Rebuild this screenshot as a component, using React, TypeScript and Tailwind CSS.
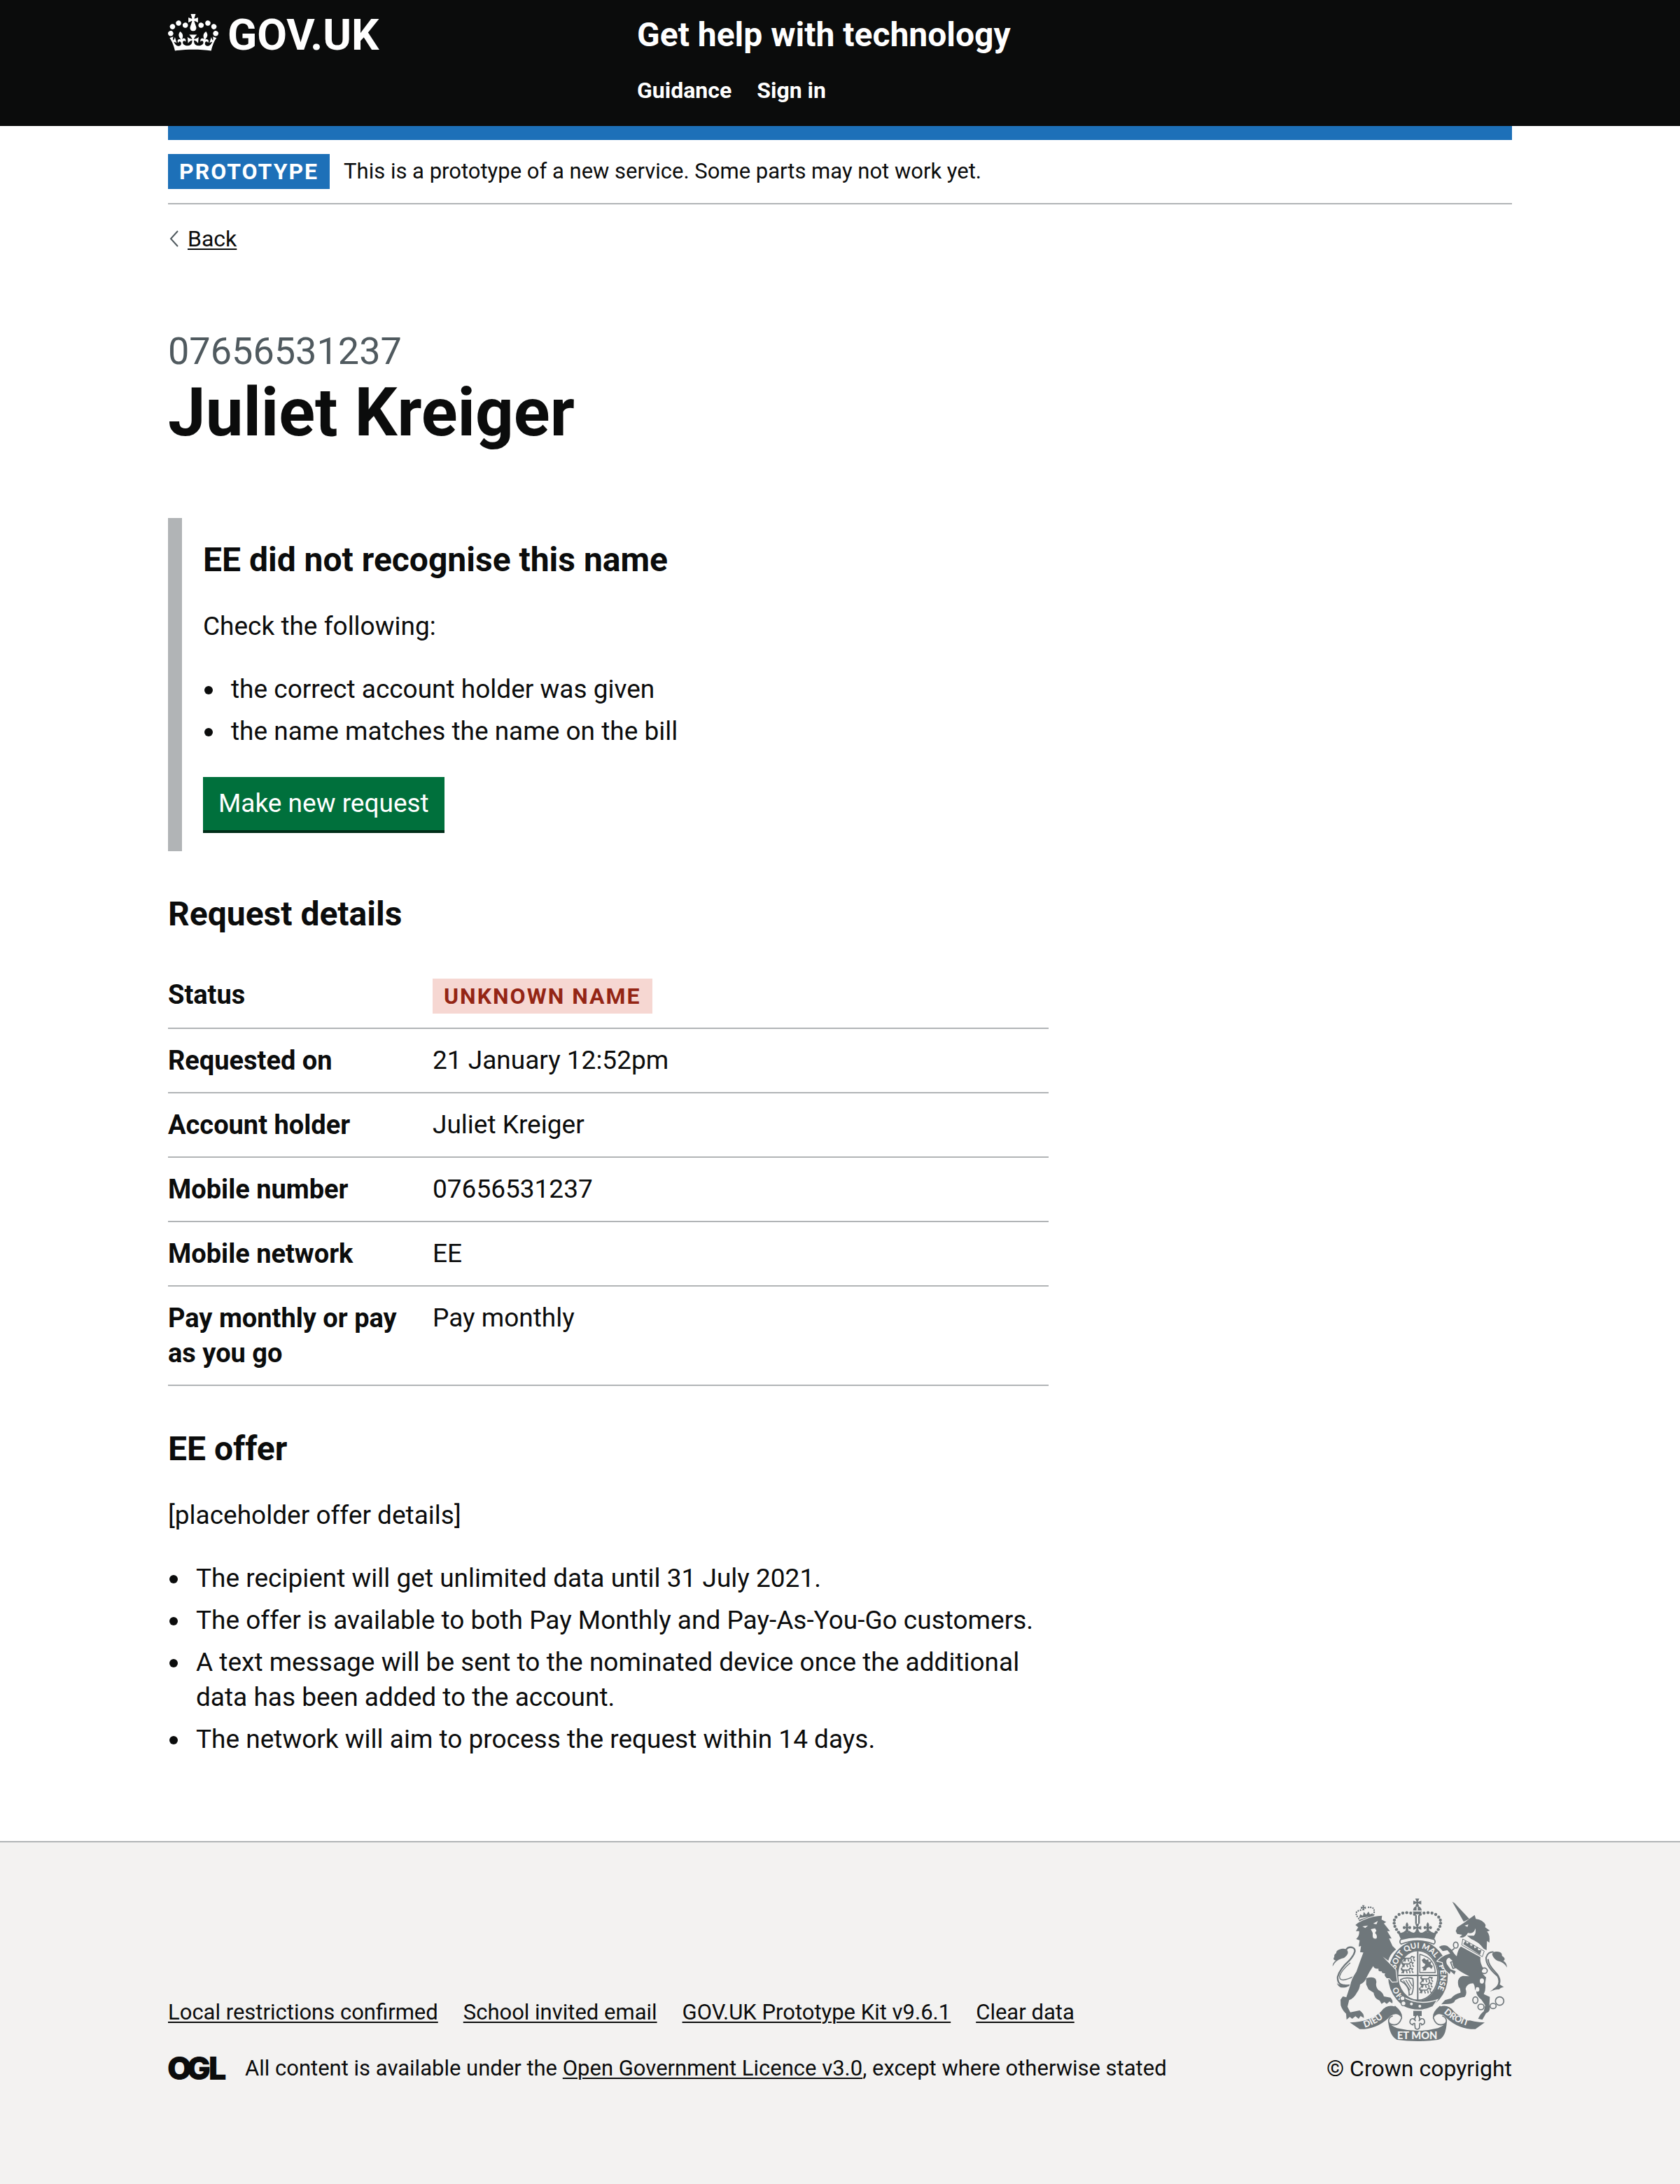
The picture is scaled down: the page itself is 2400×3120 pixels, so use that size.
import React from "react";

const link = "underline decoration-2 underline-offset-[3px]";
const h2 = "text-[48px] leading-[60px] font-bold";

const rows: [string, React.ReactNode][] = [
  [
    "Status",
    <strong className="mt-[2px] block w-fit bg-[#f6d7d2] px-4 text-[32px] leading-[50px] font-bold tracking-[2px] text-[#942514] uppercase">
      Unknown name
    </strong>,
  ],
  ["Requested on", "21 January 12:52pm"],
  ["Account holder", "Juliet Kreiger"],
  ["Mobile number", "07656531237"],
  ["Mobile network", "EE"],
  ["Pay monthly or pay as you go", "Pay monthly"],
];

const checks = ["the correct account holder was given", "the name matches the name on the bill"];

const offers = [
  "The recipient will get unlimited data until 31 July 2021.",
  "The offer is available to both Pay Monthly and Pay-As-You-Go customers.",
  "A text message will be sent to the nominated device once the additional data has been added to the account.",
  "The network will aim to process the request within 14 days.",
];

const footerLinks = [
  "Local restrictions confirmed",
  "School invited email",
  "GOV.UK Prototype Kit v9.6.1",
  "Clear data",
];

function BulletList({ items }: { items: string[] }) {
  return (
    <ul className="mt-10 flex flex-col gap-[10px]">
      {items.map((item) => (
        <li key={item} className="flex gap-[26px] pl-[2px]">
          <span className="mt-5 size-3 shrink-0 rounded-full bg-current" />
          <span>{item}</span>
        </li>
      ))}
    </ul>
  );
}

function Crown() {
  return (
    <svg className="h-[53px] w-[72px] shrink-0" viewBox="0 0 132 97" fill="currentColor" aria-hidden="true">
      <path
        fillRule="evenodd"
        d="M25 30.2c3.5 1.5 7.7-.2 9.1-3.7 1.5-3.6-.2-7.8-3.9-9.2-3.6-1.4-7.6.3-9.1 3.9-1.4 3.5.3 7.5 3.9 9zM9 39.5c3.6 1.5 7.8-.2 9.2-3.7 1.5-3.6-.2-7.8-3.9-9.1-3.6-1.5-7.6.2-9.1 3.8-1.4 3.5.3 7.5 3.8 9zM4.4 57.2c3.5 1.5 7.7-.2 9.1-3.8 1.5-3.6-.2-7.7-3.9-9.1-3.5-1.5-7.6.3-9.1 3.8-1.4 3.5.3 7.6 3.9 9.1zm38.3-21.4c3.5 1.5 7.7-.2 9.1-3.8 1.5-3.6-.2-7.7-3.9-9.1-3.6-1.5-7.6.3-9.1 3.8-1.3 3.6.4 7.7 3.9 9.1zm64.4-5.6c-3.6 1.5-7.8-.2-9.1-3.7-1.5-3.6.2-7.8 3.8-9.2 3.6-1.4 7.7.3 9.2 3.9 1.3 3.5-.4 7.5-3.9 9zm15.9 9.3c-3.6 1.5-7.7-.2-9.1-3.7-1.5-3.6.2-7.8 3.7-9.1 3.6-1.5 7.7.2 9.2 3.8 1.5 3.5-.3 7.5-3.8 9zm4.7 17.7c-3.6 1.5-7.8-.2-9.2-3.8-1.5-3.6.2-7.7 3.9-9.1 3.6-1.5 7.7.3 9.2 3.8 1.3 3.5-.4 7.6-3.9 9.1zM89.3 35.8c-3.6 1.5-7.8-.2-9.2-3.8-1.4-3.6.2-7.7 3.9-9.1 3.6-1.5 7.7.3 9.2 3.8 1.4 3.6-.3 7.7-3.9 9.1zM69.7 17.7l8.9 4.7V9.3l-8.9 2.8c-.2-.3-.5-.6-.9-.9L72.4 0H59.6l3.5 11.2c-.3.3-.6.5-.9.9l-8.8-2.8v13.1l8.8-4.7c.3.3.6.7.9.9l-5 15.4v.1c-.2.8-.4 1.6-.4 2.4 0 4.1 3.1 7.5 7 8.1h.2c.3 0 .7.1 1 .1.4 0 .7 0 1-.1h.2c4-.6 7.1-4.1 7.1-8.1 0-.8-.1-1.7-.4-2.4V34l-5.1-15.4c.4-.2.7-.6 1-.9zM66 92.8c16.9 0 32.8 1.1 47.1 3.2 4-16.9 8.9-26.7 14-33.5l-9.6-3.4c1 4.9 1.1 7.2 0 10.2-1.5-1.4-3-4.3-4.2-8.7L108.6 76c2.8-2 5-3.2 7.5-3.3-4.4 9.4-10 11.9-13.6 11.2-4.3-.8-6.3-4.6-5.6-7.9 1-4.7 5.7-5.9 8-.5 4.3-8.7-3-11.4-7.6-8.8 7.1-7.2 7.9-13.5 2.1-21.1-8 6.1-8.1 12.3-4.5 20.8-4.7-5.4-12.1-2.5-9.5 6.2 3.4-5.2 7.9-2 7.2 3.1-.6 4.3-6.4 7.8-13.5 7.2-10.3-.9-10.9-8-11.2-13.8 2.5-.5 7.1 1.8 11 7.3L80.2 60c-4.1 4.4-8 5.3-12.3 5.4 1.4-4.4 8-11.6 8-11.6H55.5s6.4 7.2 7.9 11.6c-4.2-.1-8-1-12.3-5.4l1.4 16.4c3.9-5.5 8.5-7.7 10.9-7.3-.3 5.8-.9 12.8-11.1 13.8-7.2.6-12.9-2.9-13.5-7.2-.7-5 3.8-8.3 7.1-3.1 2.7-8.7-4.6-11.6-9.4-6.2 3.7-8.5 3.6-14.7-4.6-20.8-5.8 7.6-5 13.9 2.2 21.1-4.7-2.6-11.9.1-7.7 8.8 2.3-5.5 7.1-4.2 8.1.5.7 3.3-1.3 7.1-5.7 7.9-3.5.7-9-1.8-13.5-11.2 2.5.1 4.7 1.3 7.5 3.3l-4.7-15.4c-1.2 4.4-2.7 7.2-4.3 8.7-1.1-3-.9-5.3 0-10.2l-9.5 3.4c5 6.9 9.9 16.7 14 33.5 14.8-2.1 30.8-3.2 47.7-3.2z"
      />
    </svg>
  );
}

function OglLogo() {
  return (
    <svg className="h-[60px] w-[92px] shrink-0 font-['Inter',sans-serif] font-black" viewBox="1 0 92 60" fill="currentColor" fontSize="45" role="img" aria-label="OGL">
      <text x="0" y="46">O</text>
      <text x="28" y="46">G</text>
      <text x="59" y="46">L</text>
    </svg>
  );
}

const archDots = [
  [425, 104], [409, 99], [392, 97], [375, 99], [359, 105], [346, 116],
  [339, 129], [338, 142], [341, 156], [348, 169], [357, 181],
];

function Lis({ x, y }: { x: number; y: number }) {
  return (
    <path
      transform={`translate(${x} ${y})`}
      d="M0-20q9 10 4 22q8-10 14-1q1 9-8 9q-1-5-5-3q0 8 4 17h-18q4-9 4-17q-4-2-5 3q-9 0-8-9q6-9 14 1q-5-12 4-22z"
    />
  );
}

function Pattee({ x, y, s }: { x: number; y: number; s: number }) {
  return (
    <path
      transform={`translate(${x} ${y}) scale(${s})`}
      d="M-9-18h18l-6 15l15-6v18l-15-6l6 15h-18l6-15l-15 6v-18l15 6z"
    />
  );
}

function Passant({ x, y }: { x: number; y: number }) {
  return (
    <path
      transform={`translate(${x} ${y})`}
      fill="none"
      strokeWidth="5"
      d="M-26 8l6-8l-8-8l10 3h22l6-8l11 3l-4 7M-16-3l-3 12M-6-2l4 11M8-3l2 12M18 0l6 7M-26-8q-4-6 4-6"
    />
  );
}

function RoyalArms() {
  return (
    <svg className="h-[204px] w-[250px]" viewBox="72 36 750 612" fill="#6f777b" stroke="none" role="img" aria-label="Royal coat of arms">
      <defs>
        <path id="garter" d="M345 340A97 117 0 1 1 496 462" />
        <path id="garter-start" d="M380 458A97 117 0 0 1 343 366" />
        <path id="dieu" d="M212 590Q270 572 316 527" />
        <path id="droit" d="M550 526Q600 572 676 588" />
      </defs>

      {/* Central crown */}
      <g>
        <Pattee x={437} y={54} s={0.95} />
        <path d="M419 88Q420 70 437 70Q454 70 456 88Z" />
        <path d="M434 72h5v16h-5z" fill="#f3f2f1" />
        <path d="M417 92h40l-8 12h-24zM428 108h7v36h-7zM441 108h7v36h-7z" />
        {archDots.map(([x, y]) => (
          <React.Fragment key={`${x}-${y}`}>
            <circle cx={x} cy={y} r="6.5" />
            <circle cx={875 - x} cy={y} r="6.5" />
          </React.Fragment>
        ))}
        <Lis x={393} y={158} />
        <Lis x={482} y={158} />
        <Pattee x={437} y={162} s={0.95} />
        <path d="M352 176Q368 192 386 174L394 184L402 174Q416 186 424 182L437 172L450 182Q460 186 473 174L482 184L490 174Q508 192 523 176L510 210Q438 194 366 210Z" />
      </g>

      {/* Garter and shield */}
      <g>
        <ellipse cx="440" cy="366" rx="108" ry="128" fill="none" stroke="#6f777b" strokeWidth="40" />
        <ellipse cx="439" cy="366" rx="86" ry="106" fill="#f3f2f1" stroke="#6f777b" strokeWidth="5" />
        <g className="font-['Lato',sans-serif] font-black" fill="#f3f2f1" aria-hidden="true">
          <text fontSize="34">
            <textPath href="#garter">SOIT QUI MAL Y PENSE</textPath>
          </text>
          <text fontSize="34">
            <textPath href="#garter-start">HO</textPath>
          </text>
        </g>
        <path d="M354 366h170M439 262v210" fill="none" stroke="#6f777b" strokeWidth="6" />
        <g stroke="#6f777b">
          <Passant x={403} y={298} />
          <Passant x={398} y={322} />
          <Passant x={396} y={348} />
          <Passant x={480} y={386} />
          <Passant x={478} y={410} />
          <Passant x={474} y={434} />
        </g>
        <path d="M448 276Q512 290 514 354H448Z" fill="none" stroke="#6f777b" strokeWidth="4" />
        <path d="M456 300l10-8l10 8l8-4l2 12l12-2l-4 12l10 8l-6 12l-10-8l-10 4l-4 10l-14 2l4-8l-8-6l12-6l4-8l-10-6z" />
        <path d="M366 384Q384 372 418 380Q424 420 414 446L402 450Q404 410 366 390Z" fill="none" stroke="#6f777b" strokeWidth="5" />
        <path d="M378 388L406 430M388 386L411 424M400 384L416 412" fill="none" stroke="#6f777b" strokeWidth="4" />
        <path d="M366 452Q440 500 524 470L504 500Q440 530 376 498Z" stroke="#f3f2f1" strokeWidth="4" />
        <circle cx="374" cy="464" r="10" fill="#f3f2f1" stroke="#6f777b" strokeWidth="4" />
        <circle cx="378" cy="486" r="10" fill="#f3f2f1" stroke="#6f777b" strokeWidth="4" />
        <g fill="#f3f2f1">
          <circle cx="412" cy="488" r="6" />
          <circle cx="448" cy="498" r="6" />
        </g>
        <path d="M366 212Q438 192 510 212Q518 224 508 232Q438 204 368 232Q358 224 366 212Z" fill="#f3f2f1" stroke="#6f777b" strokeWidth="5" />
      </g>

      {/* Lion */}
      <g>
        <path d="M186 128L250 108L254 119L190 138Z" />
        <Pattee x={206} y={76} s={0.6} />
        <g fill="none" stroke="#6f777b" strokeWidth="7" strokeLinecap="round" strokeDasharray="0 10">
          <path d="M186 122Q160 92 196 86" />
          <path d="M250 106Q262 66 218 76" />
        </g>
        <path d="M188 120L192 104L204 110L208 94L218 106L228 92L234 104L246 100L248 112Z" />
        <path d="M158 406Q92 420 96 372Q104 340 146 302Q186 256 158 246Q140 242 132 256" fill="none" stroke="#6f777b" strokeWidth="7" />
        <path d="M170 368Q102 402 104 370Q110 346 150 312" fill="none" stroke="#6f777b" strokeWidth="4" />
        <path d="M74 328Q74 312 88 302Q72 300 82 286Q78 278 90 270Q88 258 112 252Q140 248 140 270Q134 290 112 294Q86 302 74 328Z" />
        <path d="M90 392Q94 410 124 404L146 410Q130 420 118 418Q98 420 90 392Z" />
        <path
          fillRule="evenodd"
          stroke="#f3f2f1"
          strokeWidth="7"
          paintOrder="stroke"
          d="M172 150L184 140Q230 116 268 112L286 110L284 127L304 137L294 143L320 176L308 176L327 208L316 208L331 240L346 255Q320 274 313 303L289 286L344 342L350 392L330 393L318 378L306 378Q292 365 300 358Q284 358 284 348Q268 352 271 337Q255 340 248 326Q230 352 219 376Q214 395 192 405Q190 425 178 440Q166 464 145 472L138 500L150 524L190 516Q210 530 208 548L194 540L186 552L172 541L158 552L148 544L134 556L132 530Q116 516 109 494L108 470L118 456L133 460L150 408Q154 382 176 350L194 300L206 268L192 266L196 240L186 242L190 216L175 210Q190 196 188 176L174 176L184 160ZM202 156L226 152L214 163ZM248 144L268 133L262 147ZM238 168L256 164L262 174L256 184Q268 196 262 208Q246 212 246 196L246 184Z"
        />
        <path d="M218 378Q262 366 262 394Q256 414 270 428Q290 438 294 456L322 461Q334 472 330 486L318 478L306 488L296 480L284 488L276 474Q252 464 250 440L228 426L218 404Z" />
      </g>

      {/* Unicorn */}
      <g>
        <path d="M587 50L597 56L660 124L636 136Z" />
        <path
          fillRule="evenodd"
          d="M602 176L608 160L638 140L662 122L683 107L688 124Q718 128 730 150L728 160L748 174L736 178Q750 192 746 226L736 218L734 258L722 252Q700 222 668 210L650 196L680 196Q690 184 686 164Q680 190 654 184Q640 210 618 202L630 192L608 188ZM640 152L656 148L652 158Z"
        />
        <path d="M632 210L724 262L716 286L628 236Z" fill="none" stroke="#6f777b" strokeWidth="3" />
        <path d="M634 232L644 216L650 230L662 224L666 240L680 234L682 250L696 244L698 258L712 258L706 278Z" />
        <path d="M762 428Q800 406 782 370Q730 326 732 290Q740 264 764 266M786 408Q800 380 770 350Q742 322 740 296" fill="none" stroke="#6f777b" strokeWidth="6" />
        <path d="M822 332Q820 312 806 304Q820 296 800 282Q802 266 780 264Q760 262 758 276Q764 296 782 304Q808 310 822 332Z" />
        <path d="M748 436Q770 420 790 404L808 416Q792 418 788 426Q770 424 748 436Z" />
        <path
          stroke="#f3f2f1"
          strokeWidth="7"
          paintOrder="stroke"
          d="M624 242L708 288Q704 310 720 336L712 350Q724 368 732 374L728 400Q732 430 722 446L748 458L746 494Q754 520 732 528L716 556L698 552Q708 530 722 520L728 494L712 470Q688 452 690 432L684 426Q684 408 676 400Q650 400 644 424Q652 446 640 458Q612 462 600 472Q594 488 572 488L540 490L556 472L582 464Q596 446 622 440Q624 424 614 414Q604 376 632 368L660 370Q620 350 604 336Q586 330 588 304L574 290Q556 296 564 318L580 340L602 348L596 362L580 348L576 360L560 346Q548 330 546 310L524 304Q546 280 578 272L566 258L546 262L530 244Q548 232 566 240L584 256L596 274L606 284Q612 252 624 242Z"
        />
        <g fill="#f3f2f1">
          <ellipse cx="714" cy="390" rx="9" ry="11" />
          <ellipse cx="695" cy="426" rx="8" ry="10" />
        </g>
        <g fill="none" stroke="#6f777b" strokeWidth="5">
          <ellipse cx="602" cy="236" rx="10" ry="13" />
          <path d="M596 250L582 262M580 310L596 304Q612 314 604 332L590 336Z" />
          <ellipse cx="724" cy="346" rx="13" ry="12" />
          <ellipse cx="686" cy="472" rx="11" ry="14" />
          <ellipse cx="710" cy="501" rx="13" ry="12" />
          <ellipse cx="762" cy="497" rx="13" ry="11" />
          <circle cx="790" cy="476" r="18" />
        </g>
      </g>

      {/* Motto scroll */}
      <g>
        <path d="M420 518h36v22h-36z" />
        <g fill="#f3f2f1" stroke="#6f777b" strokeWidth="5">
          <path d="M437 532q16 16 7 30q10-18 22-6q8 18-10 22q0-8-8-6l-2 20q-10 10-18 0l-2-20q-8-2-8 6q-18-4-10-22q12-12 22 6q-9-14 7-30z" />
          <path d="M340 498Q372 524 370 548Q360 578 338 578Q314 576 314 560Q316 544 332 540" />
          <path d="M536 498Q504 524 506 548Q516 578 538 578Q562 576 562 560Q560 544 544 540" />
        </g>
        <path d="M148 568Q246 562 284 518Q308 488 342 500Q368 518 370 548Q350 520 322 540Q276 590 210 596L190 596Z" />
        <path d="M726 568Q630 562 592 518Q568 488 534 500Q508 518 506 548Q526 520 554 540Q600 590 666 596L686 596Z" />
        <path d="M312 562Q320 580 350 592Q438 614 526 592Q556 580 564 562Q560 636 526 642Q438 654 350 642Q318 626 312 562Z" />
        <g className="font-['Lato',sans-serif] font-black" fill="#f3f2f1" aria-hidden="true">
          <text fontSize="38">
            <textPath href="#dieu">DIEU</textPath>
          </text>
          <text fontSize="38">
            <textPath href="#droit">DROIT</textPath>
          </text>
          <text x="437" y="638" fontSize="44" textAnchor="middle">
            ET MON
          </text>
        </g>
      </g>
    </svg>
  );
}

export default function App() {
  return (
    <div className="min-h-screen bg-white font-['Roboto',sans-serif] text-[37px] leading-[50px] text-[#0b0c0c]">
      <header className="bg-[#0b0c0c] px-[60px] text-white">
        <div className="mx-auto flex max-w-[1920px] pt-5 pb-[31px]">
          <a href="#" className="flex w-[670px] items-start gap-[13px] text-[62px] leading-[60px] font-bold">
            <Crown />
            GOV.UK
          </a>
          <div>
            <a href="#" className={`block ${h2}`}>
              Get help with technology
            </a>
            <nav className="mt-[29px] flex gap-9 text-[32px] leading-[40px] font-bold">
              <a href="#">Guidance</a>
              <a href="#">Sign in</a>
            </nav>
          </div>
        </div>
      </header>

      <div className="px-[60px]">
        <div className="mx-auto max-w-[1920px]">
          <div className="flex gap-5 border-t-20 border-b-2 border-t-[#1d70b8] border-b-[#b1b4b6] py-5 text-[31px]">
            <strong className="bg-[#1d70b8] px-4 text-[32px] font-bold tracking-[2px] text-white uppercase">Prototype</strong>
            <span>This is a prototype of a new service. Some parts may not work yet.</span>
          </div>

          <a href="#" className="mt-[29px] flex w-fit items-center gap-3 text-[32px] leading-[40px]">
            <svg className="h-6 w-4" viewBox="0 0 16 24" fill="none" stroke="#505a5f" strokeWidth="2" aria-hidden="true">
              <path d="M14 1L4 12L14 23" />
            </svg>
            <span className={link}>Back</span>
          </a>

          <main className="max-w-[1258px]">
            <span className="mt-[107px] block text-[54px] leading-[68px] text-[#505a5f]">07656531237</span>
            <h1 className="mt-[3px] text-[96px] leading-[100px] font-bold">Juliet Kreiger</h1>

            <section className="mt-[101px] border-l-20 border-[#b1b4b6] pt-[30px] pb-[26px] pl-[30px]">
              <h2 className={h2}>EE did not recognise this name</h2>
              <p className="mt-10">Check the following:</p>
              <BulletList items={checks} />
              <button type="button" className="mt-10 block h-20 border-b-4 border-[#002d18] bg-[#00703c] px-[22px] text-white">
                Make new request
              </button>
            </section>

            <h2 className={`mt-[60px] ${h2}`}>Request details</h2>
            <table className="mt-10 w-full border-separate border-spacing-0 text-left">
              <tbody>
                {rows.map(([key, value]) => (
                  <tr key={key}>
                    <th scope="row" className="w-[378px] border-b-2 border-[#b1b4b6] py-5 pr-10 align-top text-[38px] font-bold">
                      {key}
                    </th>
                    <td className="border-b-2 border-[#b1b4b6] py-5 align-top">{value}</td>
                  </tr>
                ))}
              </tbody>
            </table>

            <h2 className={`mt-[60px] ${h2}`}>EE offer</h2>
            <p className="mt-10">[placeholder offer details]</p>
            <BulletList items={offers} />
          </main>
        </div>
      </div>

      <footer className="mt-[120px] border-t-2 border-[#b1b4b6] bg-[#f3f2f1] px-[60px] pt-20 pb-[145px] text-[31px] leading-[40px]">
        <div className="mx-auto flex max-w-[1920px] items-end justify-between">
          <div>
            <ul className="flex gap-9">
              {footerLinks.map((label) => (
                <li key={label}>
                  <a href="#" className={link}>
                    {label}
                  </a>
                </li>
              ))}
            </ul>
            <div className="mt-[30px] -mb-[10px] flex items-center gap-[18px]">
              <OglLogo />
              <p>
                All content is available under the{" "}
                <a href="#" className={link}>
                  Open Government Licence v3.0
                </a>
                , except where otherwise stated
              </p>
            </div>
          </div>
          <a href="#" className="flex flex-col items-center gap-[19px] text-[32px]">
            <RoyalArms />
            © Crown copyright
          </a>
        </div>
      </footer>
    </div>
  );
}
